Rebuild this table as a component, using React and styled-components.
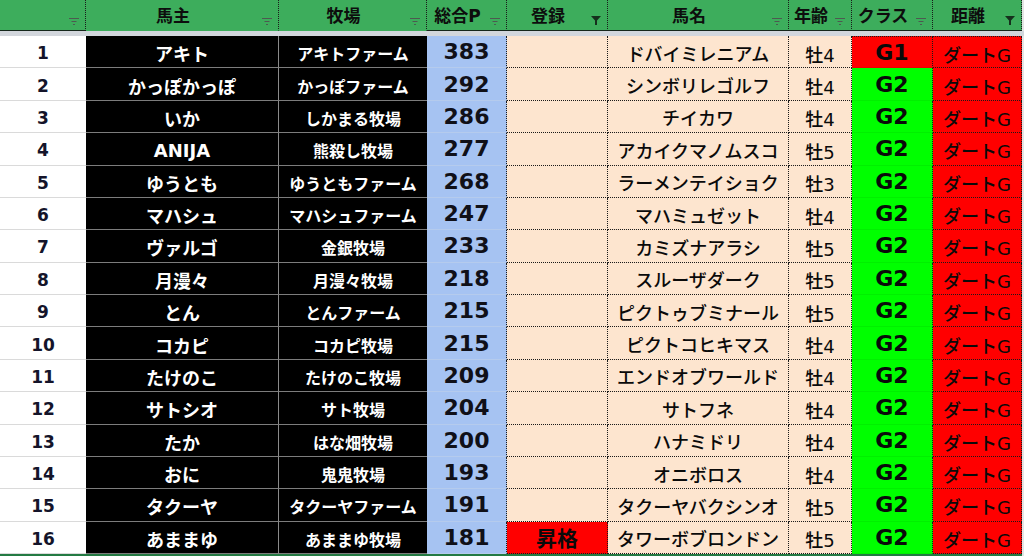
import React from "react";
import styled, { createGlobalStyle, css } from "styled-components";

const FONT = `"DejaVu Sans", "Noto Sans CJK JP", sans-serif`;
const COLS = "86px 193px 148px 80px 101px 181px 63px 81px 89px";
const GREEN = "#3dad5c";
const PEACH = "#fde5cf";
const BLUE = "#a6c3f2";
const DOT = "1px dotted #1a1a1a";

const GlobalStyle = createGlobalStyle`
  * { box-sizing: border-box; }
  html, body { margin: 0; padding: 0; background: #e4e4e4; overflow: hidden; }
  body { font-family: ${FONT}; }
`;

const Sheet = styled.div`
  width: 1024px;
  height: 556px;
  display: flex;
  flex-direction: column;
  background: #e4e4e4;
`;

const HeaderRow = styled.div`
  display: grid;
  grid-template-columns: ${COLS};
  width: 1022px;
  height: 31px;
`;

const HeaderCell = styled.div`
  display: flex;
  background: ${GREEN};
  border-right: ${DOT};
  border-bottom: 1px solid ${(p) => (p.$underline ? "#15261a" : GREEN)};
  padding-top: 6px;
`;

const HeaderLabel = styled.div`
  flex: 1;
  text-align: center;
  font-family: ${FONT};
  font-weight: 700;
  font-size: 17px;
  line-height: 20px;
  color: #0d0d0d;
  white-space: nowrap;
`;

const FilterButton = styled.span`
  display: flex;
  align-self: flex-end;
  width: 10px;
  margin: 0 6px 5px 2px;
`;

const Band = styled.div`
  height: 5px;
  width: 1024px;
  background: #d2d6dc;
`;

const Body = styled.div`
  display: flex;
  flex-direction: column;
  width: 1022px;
  border-bottom: 2px solid #237a43;
`;

const Row = styled.div`
  display: grid;
  grid-template-columns: ${COLS};
  height: 32.375px;
`;

const BaseCell = styled.div`
  display: flex;
  align-items: center;
  justify-content: center;
  overflow: hidden;
  white-space: nowrap;
  font-family: ${FONT};
  color: #0a0a0a;
`;

const NumCell = styled(BaseCell)`
  background: #ffffff;
  border-bottom: 1px solid #dadada;
  font-size: 17px;
  font-weight: 700;
  color: #14142a;
  padding-top: 3px;
`;

const OwnerCell = styled(BaseCell)`
  background: #000;
  color: #fff;
  border-bottom: 1px solid #7c7c7c;
  border-right: 1px solid #8a8a8a;
  font-size: 18px;
  font-weight: 700;
  padding-top: 3px;
`;

const FarmCell = styled(BaseCell)`
  background: #000;
  color: #fff;
  border-bottom: 1px solid #7c7c7c;
  font-size: 16px;
  font-weight: 700;
  padding-top: 3px;
`;

const PointsCell = styled(BaseCell)`
  background: ${BLUE};
  border-bottom: 1px solid #b5cbed;
  border-right: ${DOT};
  font-size: 22px;
  font-weight: 700;
  color: #101018;
`;

const RegCell = styled(BaseCell)`
  background: ${(p) => (p.$promoted ? "#ff0000" : PEACH)};
  border-bottom: ${DOT};
  border-right: ${DOT};
  font-size: 21px;
  font-weight: 700;
`;

const peachCell = css`
  background: ${PEACH};
  border-bottom: ${DOT};
  border-right: ${DOT};
  font-weight: 500;
  padding-top: 2px;
`;

const HorseCell = styled(BaseCell)`
  ${peachCell};
  font-size: 18px;
`;

const AgeCell = styled(BaseCell)`
  ${peachCell};
  font-size: 18px;
  padding-top: 4px;
`;

const ClassCell = styled(BaseCell)`
  background: ${(p) => (p.$grade === "G1" ? "#ff0000" : "#00ff00")};
  border-bottom: 1px solid rgba(0, 0, 0, 0.06);
  border-right: ${DOT};
  border-top: ${(p) => (p.$first ? DOT : "none")};
  font-size: 22px;
  font-weight: 700;
`;

const DistCell = styled(BaseCell)`
  background: #ff0000;
  border-bottom: ${DOT};
  border-right: ${DOT};
  border-top: ${(p) => (p.$first ? DOT : "none")};
  font-size: 18px;
  font-weight: 500;
  padding-top: 3px;
`;

const SortIcon = () => (
  <svg width="10" height="7" viewBox="0 0 10 7">
    <rect x="0" y="0" width="10" height="1" fill="#4d5a50" />
    <rect x="2.5" y="3" width="5" height="1" fill="#4d5a50" />
    <rect x="4" y="6" width="2" height="1" fill="#4d5a50" />
  </svg>
);

const FunnelIcon = () => (
  <svg width="10" height="9" viewBox="0 0 10 9">
    <path d="M0 0 H10 L6 4.5 V9 H4 V4.5 Z" fill="#16301d" />
  </svg>
);

const headers = [
  { label: "", underline: true },
  { label: "馬主" },
  { label: "牧場" },
  { label: "総合P", underline: true },
  { label: "登録", underline: true, active: true },
  { label: "馬名", underline: true },
  { label: "年齢", underline: true },
  { label: "クラス", underline: true },
  { label: "距離", underline: true, active: true },
];

const rows = [
  ["アキト", "アキトファーム", 383, "", "ドバイミレニアム", "牡4", "G1"],
  ["かっぽかっぽ", "かっぽファーム", 292, "", "シンボリレゴルフ", "牡4", "G2"],
  ["いか", "しかまる牧場", 286, "", "チイカワ", "牡4", "G2"],
  ["ANIJA", "熊殺し牧場", 277, "", "アカイクマノムスコ", "牡5", "G2"],
  ["ゆうとも", "ゆうともファーム", 268, "", "ラーメンテイショク", "牡3", "G2"],
  ["マハシュ", "マハシュファーム", 247, "", "マハミュゼット", "牡4", "G2"],
  ["ヴァルゴ", "金銀牧場", 233, "", "カミズナアラシ", "牡5", "G2"],
  ["月漫々", "月漫々牧場", 218, "", "スルーザダーク", "牡5", "G2"],
  ["とん", "とんファーム", 215, "", "ピクトゥブミナール", "牡5", "G2"],
  ["コカピ", "コカピ牧場", 215, "", "ピクトコヒキマス", "牡4", "G2"],
  ["たけのこ", "たけのこ牧場", 209, "", "エンドオブワールド", "牡4", "G2"],
  ["サトシオ", "サト牧場", 204, "", "サトフネ", "牡4", "G2"],
  ["たか", "はな畑牧場", 200, "", "ハナミドリ", "牡4", "G2"],
  ["おに", "鬼鬼牧場", 193, "", "オニボロス", "牡4", "G2"],
  ["タクーヤ", "タクーヤファーム", 191, "", "タクーヤバクシンオ", "牡5", "G2"],
  ["あままゆ", "あままゆ牧場", 181, "昇格", "タワーボブロンドン", "牡5", "G2"],
];

export default function App() {
  return (
    <>
      <GlobalStyle />
      <Sheet>
        <HeaderRow>
          {headers.map((h, i) => (
            <HeaderCell key={i} $underline={h.underline}>
              <HeaderLabel>{h.label}</HeaderLabel>
              <FilterButton>{h.active ? <FunnelIcon /> : <SortIcon />}</FilterButton>
            </HeaderCell>
          ))}
        </HeaderRow>
        <Band />
        <Body>
          {rows.map(([owner, farm, pts, reg, horse, age, grade], i) => (
            <Row key={i}>
              <NumCell>{i + 1}</NumCell>
              <OwnerCell>{owner}</OwnerCell>
              <FarmCell>{farm}</FarmCell>
              <PointsCell>{pts}</PointsCell>
              <RegCell $promoted={!!reg}>{reg}</RegCell>
              <HorseCell>{horse}</HorseCell>
              <AgeCell>{age}</AgeCell>
              <ClassCell $grade={grade} $first={i === 0}>{grade}</ClassCell>
              <DistCell $first={i === 0}>ダートG</DistCell>
            </Row>
          ))}
        </Body>
      </Sheet>
    </>
  );
}
